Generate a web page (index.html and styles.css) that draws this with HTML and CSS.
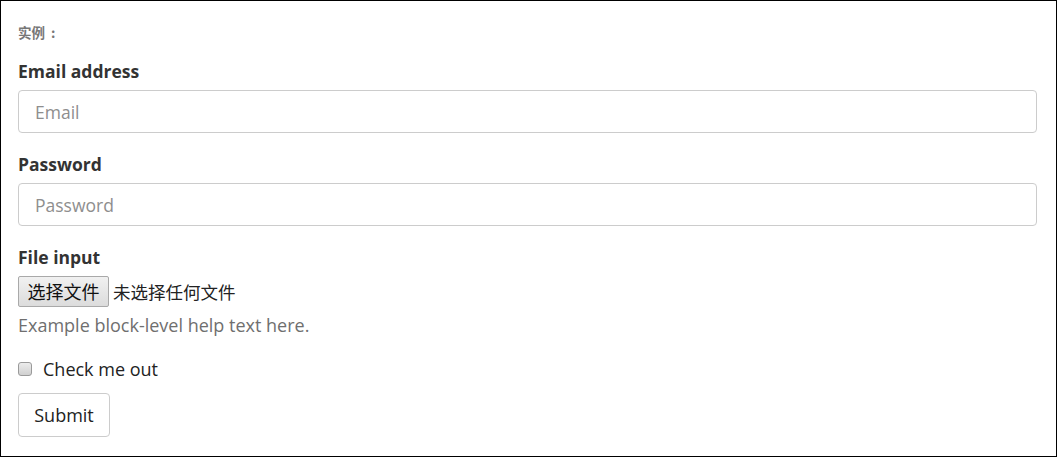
FILE: index.html
```html
<!DOCTYPE html>
<html lang="zh-CN">
<head>
	<meta charset="UTF-8">
	<meta name="viewport" content="width=device-width, initial-scale=1.0">
	<title>Form example</title>
	<link rel="stylesheet" href="styles.css">
</head>
<body>
<div class="frame">
	<p class="caption">实例<span class="colon">:</span></p>
	<form class="form">
		<div class="form-group">
			<label class="form-label">Email address</label>
			<div class="form-control"><span class="placeholder">Email</span></div>
		</div>
		<div class="form-group">
			<label class="form-label">Password</label>
			<div class="form-control"><span class="placeholder">Password</span></div>
		</div>
		<div class="form-group file-group">
			<label class="form-label">File input</label>
			<div class="file-row">
				<span class="file-btn">选择文件</span>
				<span class="file-name">未选择任何文件</span>
			</div>
			<p class="help-text">Example block-level help text here.</p>
		</div>
		<div class="check">
			<span class="check-box"></span>
			<span class="check-label">Check me out</span>
		</div>
		<span class="btn">Submit</span>
	</form>
</div>
</body>
</html>
```

FILE: styles.css
```css
html, body {
	margin: 0;
	padding: 0;
	background: #fff;
}
.frame {
	height: 455px;
	width: 1019px;
	border: 1px solid #000;
	padding: 0 19px 0 17px;
	font-family: "Open Sans", "Noto Sans CJK SC", sans-serif;
	color: #333;
	overflow: hidden;
}
.caption {
	margin: 0;
	padding-top: 22px;
	height: 18px;
	line-height: 18px;
	font-size: 13.5px;
	font-weight: bold;
	color: #777;
	font-family: "Noto Sans CJK SC", sans-serif;
}
.caption .colon {
	margin-left: 6px;
}
.form {
	margin-top: 17px;
}
.form-group {
	margin-bottom: 18px;
}
.form-label {
	display: block;
	height: 26px;
	line-height: 26px;
	margin-bottom: 6px;
	font-size: 17.5px;
	font-weight: bold;
	color: #333;
}
.form-control {
	height: 41px;
	border: 1px solid #ccc;
	border-radius: 4px;
	padding: 0 16px;
	display: flex;
	align-items: center;
	font-size: 17.5px;
}
.placeholder {
	color: #8e8e8e;
}
.file-group .form-label {
	margin-bottom: 6px;
}
.file-row {
	display: flex;
	align-items: center;
	height: 31px;
}
.file-btn {
	box-sizing: border-box;
	height: 31px;
	width: 91px;
	border: 1px solid #a9a9a9;
	border-radius: 2px;
	background: linear-gradient(#f1f1f1, #dcdcdc);
	font-family: "Noto Sans CJK SC", sans-serif;
	font-size: 18px;
	line-height: 29px;
	text-align: center;
	color: #111;
}
.file-name {
	margin-left: 4px;
	font-family: "Noto Sans CJK SC", sans-serif;
	font-size: 17.5px;
	color: #222;
}
.help-text {
	margin: 6px 0 0;
	height: 25px;
	line-height: 25px;
	font-size: 18px;
	color: #6f6f6f;
}
.check {
	display: flex;
	align-items: center;
	height: 26px;
	margin-top: 0;
}
.check-box {
	box-sizing: border-box;
	width: 14px;
	height: 14px;
	border: 1px solid #9a9a9a;
	border-radius: 3px;
	background: linear-gradient(#ececec, #d0d0d0);
}
.check-label {
	margin-left: 11px;
	font-size: 18px;
	color: #222;
}
.btn {
	display: inline-block;
	box-sizing: border-box;
	margin-top: 11px;
	height: 44px;
	width: 92px;
	border: 1px solid #ccc;
	border-radius: 4px;
	line-height: 42px;
	text-align: center;
	font-size: 18px;
	color: #222;
}
```
